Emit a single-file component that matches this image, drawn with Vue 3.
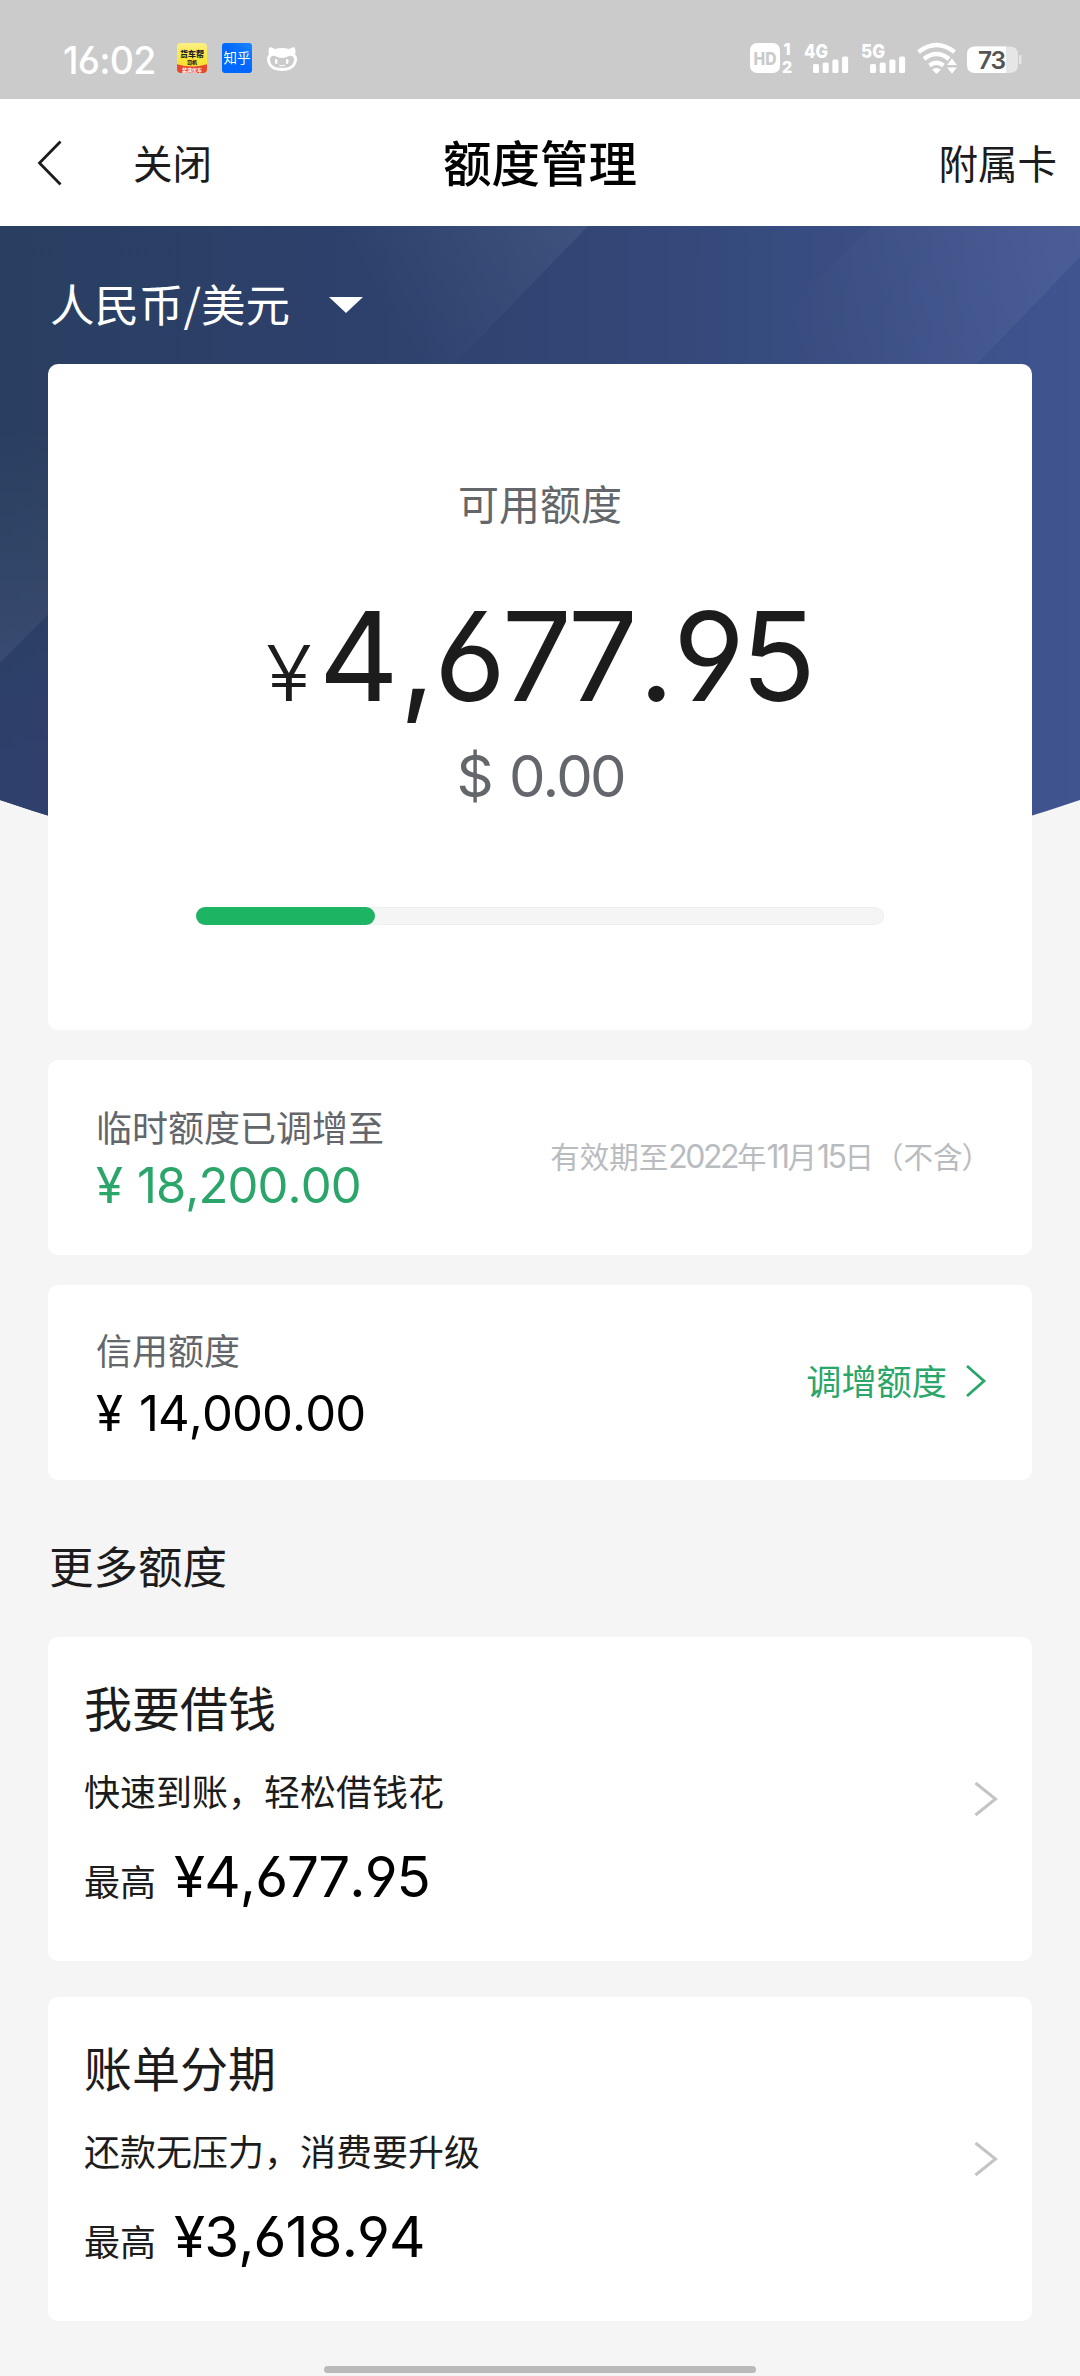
<script setup>
const plans = [
  { title: '我要借钱', note: '快速到账，轻松借钱花', amount: '¥4,677.95' },
  { title: '账单分期', note: '还款无压力，消费要升级', amount: '¥3,618.94' },
]
const usedPercent = 26
const bars = [9, 10.5, 13.5, 16.5]
</script>

<template>
  <div class="screen">
    <header class="status">
      <span class="clock">16:02</span>
      <svg class="app-icons" width="122" height="32" viewBox="0 0 122 32">
        <defs>
          <clipPath id="round"><rect x="1" y="1" width="30" height="30" rx="4" /></clipPath>
          <linearGradient id="yellow" x1="0" y1="0" x2="0" y2="1">
            <stop offset="0" stop-color="#fbf08a" /><stop offset=".5" stop-color="#f9e63a" /><stop offset="1" stop-color="#f7d82c" />
          </linearGradient>
          <linearGradient id="blue" x1="1" y1="0" x2="0" y2="1">
            <stop offset="0" stop-color="#1a86ff" /><stop offset=".5" stop-color="#0068ff" />
          </linearGradient>
        </defs>
        <g clip-path="url(#round)">
          <rect width="32" height="32" fill="url(#yellow)" />
          <path d="M0 22Q16 27 32 22V32H0z" fill="#e5482d" />
        </g>
        <text x="16" y="14.500" font-size="8" font-weight="900" text-anchor="middle" fill="#222">货车帮</text>
        <text x="16" y="21.500" font-size="5" font-weight="900" text-anchor="middle" fill="#222">司机</text>
        <text x="16" y="30" font-size="5" font-weight="700" text-anchor="middle" fill="#fff">装满优车</text>
        <rect x="46" y="1" width="30" height="30" rx="3" fill="url(#blue)" />
        <text x="61" y="21" font-size="13.500" font-weight="400" text-anchor="middle" fill="#fff">知乎</text>
        <path d="M93 6Q94 4 99 7Q106 5 113 7Q118 4 119 6Q120 10 119 12Q121 14 121 18Q119 29 106 29Q93 29 91 18Q91 14 93 12Q92 10 93 6z" fill="#fff" />
        <path d="M94 17Q95 13 99 14Q106 18 113 14Q117 13 118 17Q118 26 106 26Q94 26 94 17z" fill="#cbcbcb" />
        <rect x="99" y="17" width="2.4" height="5" rx="1.2" fill="#fff" />
        <rect x="110" y="17" width="2.4" height="5" rx="1.2" fill="#fff" />
        <path d="M103 23Q106 25 109 23" stroke="#fff" stroke-width="1" fill="none" />
      </svg>
      <svg class="sys-icons" width="272" height="32" viewBox="0 0 272 32" fill="#fff">
        <rect x="0" y="1" width="30" height="30" rx="7" />
        <text x="3.500" y="22.500" font-size="17.500" font-weight="800" fill="#cbcbcb" textLength="23" lengthAdjust="spacingAndGlyphs">HD</text>
        <text x="37" y="13" font-size="16" font-weight="800" text-anchor="middle">1</text>
        <text x="37" y="30.500" font-size="16" font-weight="800" text-anchor="middle">2</text>
        <text x="54" y="15.500" font-size="19" font-weight="800" textLength="24" lengthAdjust="spacingAndGlyphs">4G</text>
        <text x="111" y="15.500" font-size="19" font-weight="800" textLength="24" lengthAdjust="spacingAndGlyphs">5G</text>
        <g v-for="x in [63, 120]" :key="x">
          <rect v-for="(h, i) in bars" :key="i" :x="x + i * 9.7" :y="31 - h" width="6" :height="h" rx="1.5" />
        </g>
        <g fill="none" stroke="#fff" stroke-width="4.400">
          <path d="M168.500 10Q186.500-4 204.500 10" />
          <path d="M174 17Q186.500 7 199 17" />
          <path d="M179.500 23.500Q186.500 18 193.500 23.500" />
        </g>
        <path d="M182 27.500Q186.500 24.500 191 27.500L186.500 32z" />
        <path d="M196 23.500L202 15.500L208 23.500zM196 25H208L202 32.500z" stroke="#cbcbcb" stroke-width="1.200" />
        <path d="M224 4.500H259Q268 4.500 268 12V23Q268 31 259 31H224z" fill="#e6e6e6" />
        <rect x="269" y="13" width="2.500" height="9" rx="1" fill="#e6e6e6" />
        <path d="M225 4.500H256V31H225Q217 31 217 23V12Q217 4.500 225 4.500z" />
        <text x="242" y="26.500" font-size="24.500" font-weight="600" text-anchor="middle" fill="#555" textLength="28">73</text>
      </svg>
    </header>

    <nav class="nav">
      <svg class="back" width="26" height="46" viewBox="0 0 26 46"><path d="M23.500 1.500L2.500 23L23.500 44.500" fill="none" stroke="#1c1c1c" stroke-width="2.800" /></svg>
      <span class="close">关闭</span>
      <span class="nav-title">额度管理</span>
      <span class="sub-card">附属卡</span>
    </nav>

    <main class="body">
      <svg class="hero" width="1080" height="700" viewBox="0 0 1080 700">
        <defs>
          <linearGradient id="base" x1="0" y1="0" x2="1" y2="0">
            <stop offset="0" stop-color="#293f61" />
            <stop offset=".3" stop-color="#2d406b" />
            <stop offset=".6" stop-color="#334878" />
            <stop offset="1" stop-color="#405490" />
          </linearGradient>
          <linearGradient id="bandA" gradientUnits="userSpaceOnUse" x1="400" y1="110" x2="570" y2="0">
            <stop offset="0" stop-color="#fff" stop-opacity="0" /><stop offset="1" stop-color="#fff" stop-opacity=".06" />
          </linearGradient>
          <linearGradient id="bandC" gradientUnits="userSpaceOnUse" x1="780" y1="100" x2="1040" y2="10">
            <stop offset="0" stop-color="#fff" stop-opacity="0" /><stop offset="1" stop-color="#fff" stop-opacity=".05" />
          </linearGradient>
          <linearGradient id="bandL" x1="0" y1="0" x2="0" y2="1">
            <stop offset="0" stop-color="#fff" stop-opacity="0" /><stop offset="1" stop-color="#fff" stop-opacity=".06" />
          </linearGradient>
          <linearGradient id="lowL" x1="0" y1="0" x2="0" y2="1">
            <stop offset="0" stop-color="#30406e" stop-opacity="0" /><stop offset="1" stop-color="#30406e" />
          </linearGradient>
          <clipPath id="curve"><path d="M0 0H1080V574Q540 758 0 574z" /></clipPath>
        </defs>
        <g clip-path="url(#curve)">
          <rect width="1080" height="700" fill="url(#base)" />
          <rect y="300" width="60" height="300" fill="url(#lowL)" />
          <path d="M340 0H588L448 145H240z" fill="url(#bandA)" />
          <path d="M872 0H1080V31L970 145H730z" fill="url(#bandC)" />
          <path d="M0 200H60V376L0 437z" fill="url(#bandL)" />
        </g>
      </svg>

      <div class="currency">
        <span>人民币/美元</span>
        <svg width="34" height="16" viewBox="0 0 34 16"><path d="M0 0H34L17 16z" fill="#fff" /></svg>
      </div>

      <section class="card available">
        <div class="avail-label">可用额度</div>
        <div class="avail-amount"><span class="yen">¥</span><span class="big">4<i>,</i>677<i>.</i>95</span></div>
        <div class="usd">$ 0.00</div>
        <div class="track"><div class="fill" :style="{ width: usedPercent + '%' }"></div></div>
      </section>

      <section class="card limit">
        <div class="limit-text temp">
          <span class="limit-label">临时额度已调增至</span>
          <span class="limit-amount green">¥ 18,200.00</span>
        </div>
        <span class="expiry">有效期至<b>2022</b>年<b>11</b>月<b>15</b>日（不<span class="tight">含</span>）</span>
      </section>

      <section class="card limit">
        <div class="limit-text credit">
          <span class="limit-label">信用额度</span>
          <span class="limit-amount">¥ 14,000.00</span>
        </div>
        <a class="raise">
          <span>调增额度</span>
          <svg width="22" height="34" viewBox="0 0 22 34"><path d="M2 2L19 17L2 32" fill="none" stroke="#2ba66a" stroke-width="2.800" /></svg>
        </a>
      </section>

      <h2 class="more">更多额度</h2>

      <section v-for="plan in plans" :key="plan.title" class="card plan">
        <div class="plan-text">
          <div class="plan-title">{{ plan.title }}</div>
          <div class="plan-note">{{ plan.note }}</div>
          <div class="plan-max"><span class="max-label">最高</span><span class="max-amount">{{ plan.amount }}</span></div>
        </div>
        <svg class="plan-arrow" width="24" height="36" viewBox="0 0 24 36"><path d="M1.500 2L21.500 18L1.500 34" fill="none" stroke="#c4c4c4" stroke-width="3" /></svg>
      </section>
    </main>
    <div class="home-bar"></div>
  </div>
</template>

<style>
body { background: #f5f5f5; }
</style>

<style scoped>
.screen {
  position: relative;
  width: 1080px;
  height: 2376px;
  overflow: hidden;
  background: #f5f5f5;
  color: #1c1c1c;
  font-family: "Noto Sans CJK SC", sans-serif;
  white-space: nowrap;
}
.status {
  display: flex;
  align-items: center;
  height: 99px;
  padding: 16px 60px 0 63px;
  box-sizing: border-box;
  background: #cbcbcb;
}
.clock {
  width: 113px;
  color: #fff;
  font: 500 37.500px/40px Inter, sans-serif;
  font-feature-settings: "cv03", "cv04";
  letter-spacing: -.8px;
  padding-top: 6px;
  box-sizing: border-box;
}
.status svg { font-family: Inter, "Noto Sans CJK SC", sans-serif; overflow: visible; }
.sys-icons { margin-left: auto; margin-right: -2px; }
.nav {
  display: flex;
  align-items: center;
  position: relative;
  height: 127px;
  padding: 0 23px 3px 37px;
  box-sizing: border-box;
  background: #fff;
  font-size: 39.500px;
}
.back { margin-top: 3px; }
.close { margin-left: 70px; }
.nav-title {
  position: absolute;
  left: 0;
  right: 0;
  text-align: center;
  font-size: 48.500px;
  font-weight: 500;
  color: #000;
  pointer-events: none;
}
.sub-card { margin-left: auto; }
.body { position: relative; padding: 0 48px; }
.hero { position: absolute; left: 0; top: 0; }
.currency {
  position: relative;
  display: flex;
  align-items: center;
  height: 138px;
  box-sizing: border-box;
  padding: 16px 0 0 2px;
  gap: 39px;
  color: #fff;
  font-size: 44.500px;
  line-height: 60px;
}
.currency svg { margin-top: 4px; }
.card {
  position: relative;
  box-sizing: border-box;
  background: #fff;
  border-radius: 10px;
}
.available {
  height: 666px;
  padding-top: 108px;
  display: flex;
  flex-direction: column;
  align-items: center;
}
.avail-label { font-size: 41px; line-height: 60px; color: #63666a; }
.avail-amount {
  display: flex;
  align-items: baseline;
  height: 130px;
  margin-top: 59px;
  font-family: Inter, sans-serif;
  font-feature-settings: "cv03", "cv04";
  font-kerning: none;
  line-height: 130px;
}
.yen { font-size: 77px; font-weight: 350; margin-right: 9px; transform: scaleX(1.1); }
.big { font-size: 124px; font-weight: 370; letter-spacing: -4.300px; }
.big i { font-style: normal; margin: 0 3px 0 5px; }
.usd {
  margin-top: 25px;
  height: 60px;
  font: 400 58px/60px Inter, sans-serif;
  letter-spacing: -3px;
  word-spacing: 5px;
  font-kerning: none;
  color: #63666a;
}
.track {
  width: 688px;
  height: 18px;
  margin-top: 101px;
  border-radius: 9px;
  background: #f5f5f5;
  box-shadow: inset 0 0 0 1px #efefef;
}
.fill { height: 18px; border-radius: 9px; background: #1db464; }
.limit {
  display: flex;
  justify-content: space-between;
  align-items: center;
  height: 195px;
  margin-top: 30px;
  padding: 0 48px;
}
.limit-text { display: flex; flex-direction: column; }
.limit-label { font-size: 36px; line-height: 48px; color: #63666a; }
.limit-amount {
  font: 400 49px/50px Inter, sans-serif;
  letter-spacing: -.900px;
  word-spacing: 2px;
  font-kerning: none;
  color: #000;
}
.temp { gap: 11px; padding-bottom: 2px; }
.credit { gap: 16px; padding-bottom: 2px; }
.credit .limit-amount { word-spacing: 4px; }
.limit-amount.green { color: #2ba66a; }
.expiry { font-size: 29.500px; color: #b9bcbf; margin-right: -7px; padding-bottom: 5px; }
.expiry b {
  font: 400 32px/30px Inter, sans-serif;
  letter-spacing: -2.500px;
}
.tight { letter-spacing: -1px; }
.raise {
  display: flex;
  align-items: center;
  gap: 18px;
  margin-right: -3px;
  padding-bottom: 5px;
  font-size: 35.200px;
  line-height: 40px;
  color: #2ba66a;
}
.raise svg { margin-top: 2px; }
.more {
  margin: 57px 0 0 1px;
  height: 100px;
  line-height: 56px;
  font-size: 44.500px;
  font-weight: 400;
}
.plan {
  display: flex;
  align-items: center;
  justify-content: space-between;
  height: 324px;
  padding: 0 34px 0 36px;
}
.plan + .plan { margin-top: 36px; }
.plan-text { padding-bottom: 16px; }
.plan-title { font-size: 48px; line-height: 60px; }
.plan-note { font-size: 36px; line-height: 48px; margin-top: 30px; }
.plan-max { display: flex; align-items: center; height: 60px; margin-top: 33px; }
.max-label { font-size: 36px; line-height: 60px; padding-top: 6px; }
.max-amount {
  margin-left: 18px;
  color: #000;
  font: 400 56.500px/60px Inter, sans-serif;
  font-feature-settings: "cv03", "cv04";
  font-kerning: none;
  letter-spacing: -.900px;
}
.home-bar {
  position: absolute;
  left: 324px;
  bottom: 3px;
  width: 432px;
  height: 7px;
  border-radius: 4px;
  background: #bababa;
}
</style>
